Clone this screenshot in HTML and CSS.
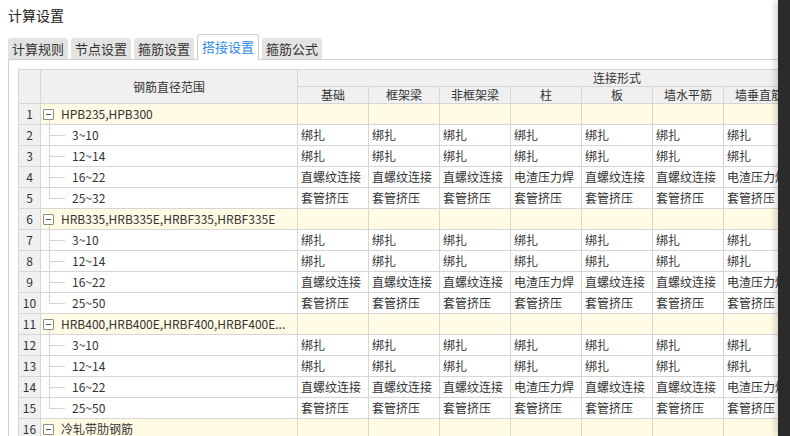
FILE: index.html
```html
<!DOCTYPE html>
<html lang="zh-CN">
<head>
<meta charset="utf-8">
<title>计算设置</title>
<link rel="stylesheet" href="styles.css">
</head>
<body>
<div class="app">
  <div class="main">
    <div class="title">计算设置</div>
    <div class="tabs">
      <div class="tab">计算规则</div>
      <div class="tab">节点设置</div>
      <div class="tab">箍筋设置</div>
      <div class="tab active">搭接设置</div>
      <div class="tab">箍筋公式</div>
    </div>
    <div class="panel">
      <table class="grid">
        <colgroup>
          <col class="c-num"><col class="c-name">
          <col class="c-d"><col class="c-d"><col class="c-d"><col class="c-d"><col class="c-d"><col class="c-d"><col class="c-d"><col class="c-d"><col class="c-d">
        </colgroup>
        <thead>
          <tr class="h1">
            <th class="num" rowspan="2"></th>
            <th rowspan="2">钢筋直径范围</th>
            <th colspan="9">连接形式</th>
          </tr>
          <tr class="h2">
            <th>基础</th><th>框架梁</th><th>非框架梁</th><th>柱</th><th>板</th><th>墙水平筋</th><th>墙垂直筋</th><th>其它</th><th>螺旋筋</th>
          </tr>
        </thead>
        <tbody>
          <tr class="group"><th class="num">1</th><td class="name"><span class="toggle"></span>HPB235,HPB300</td><td></td><td></td><td></td><td></td><td></td><td></td><td></td><td></td><td></td></tr>
          <tr class="child"><th class="num">2</th><td class="name">3~10</td><td>绑扎</td><td>绑扎</td><td>绑扎</td><td>绑扎</td><td>绑扎</td><td>绑扎</td><td>绑扎</td><td>绑扎</td><td>绑扎</td></tr>
          <tr class="child"><th class="num">3</th><td class="name">12~14</td><td>绑扎</td><td>绑扎</td><td>绑扎</td><td>绑扎</td><td>绑扎</td><td>绑扎</td><td>绑扎</td><td>绑扎</td><td>绑扎</td></tr>
          <tr class="child"><th class="num">4</th><td class="name">16~22</td><td>直螺纹连接</td><td>直螺纹连接</td><td>直螺纹连接</td><td>电渣压力焊</td><td>直螺纹连接</td><td>直螺纹连接</td><td>电渣压力焊</td><td>直螺纹连接</td><td>直螺纹连接</td></tr>
          <tr class="child last"><th class="num">5</th><td class="name">25~32</td><td>套管挤压</td><td>套管挤压</td><td>套管挤压</td><td>套管挤压</td><td>套管挤压</td><td>套管挤压</td><td>套管挤压</td><td>套管挤压</td><td>套管挤压</td></tr>
          <tr class="group"><th class="num">6</th><td class="name"><span class="toggle"></span>HRB335,HRB335E,HRBF335,HRBF335E</td><td></td><td></td><td></td><td></td><td></td><td></td><td></td><td></td><td></td></tr>
          <tr class="child"><th class="num">7</th><td class="name">3~10</td><td>绑扎</td><td>绑扎</td><td>绑扎</td><td>绑扎</td><td>绑扎</td><td>绑扎</td><td>绑扎</td><td>绑扎</td><td>绑扎</td></tr>
          <tr class="child"><th class="num">8</th><td class="name">12~14</td><td>绑扎</td><td>绑扎</td><td>绑扎</td><td>绑扎</td><td>绑扎</td><td>绑扎</td><td>绑扎</td><td>绑扎</td><td>绑扎</td></tr>
          <tr class="child"><th class="num">9</th><td class="name">16~22</td><td>直螺纹连接</td><td>直螺纹连接</td><td>直螺纹连接</td><td>电渣压力焊</td><td>直螺纹连接</td><td>直螺纹连接</td><td>电渣压力焊</td><td>直螺纹连接</td><td>直螺纹连接</td></tr>
          <tr class="child last"><th class="num">10</th><td class="name">25~50</td><td>套管挤压</td><td>套管挤压</td><td>套管挤压</td><td>套管挤压</td><td>套管挤压</td><td>套管挤压</td><td>套管挤压</td><td>套管挤压</td><td>套管挤压</td></tr>
          <tr class="group"><th class="num">11</th><td class="name"><span class="toggle"></span>HRB400,HRB400E,HRBF400,HRBF400E...</td><td></td><td></td><td></td><td></td><td></td><td></td><td></td><td></td><td></td></tr>
          <tr class="child"><th class="num">12</th><td class="name">3~10</td><td>绑扎</td><td>绑扎</td><td>绑扎</td><td>绑扎</td><td>绑扎</td><td>绑扎</td><td>绑扎</td><td>绑扎</td><td>绑扎</td></tr>
          <tr class="child"><th class="num">13</th><td class="name">12~14</td><td>绑扎</td><td>绑扎</td><td>绑扎</td><td>绑扎</td><td>绑扎</td><td>绑扎</td><td>绑扎</td><td>绑扎</td><td>绑扎</td></tr>
          <tr class="child"><th class="num">14</th><td class="name">16~22</td><td>直螺纹连接</td><td>直螺纹连接</td><td>直螺纹连接</td><td>电渣压力焊</td><td>直螺纹连接</td><td>直螺纹连接</td><td>电渣压力焊</td><td>直螺纹连接</td><td>直螺纹连接</td></tr>
          <tr class="child last"><th class="num">15</th><td class="name">25~50</td><td>套管挤压</td><td>套管挤压</td><td>套管挤压</td><td>套管挤压</td><td>套管挤压</td><td>套管挤压</td><td>套管挤压</td><td>套管挤压</td><td>套管挤压</td></tr>
          <tr class="group"><th class="num">16</th><td class="name"><span class="toggle"></span>冷轧带肋钢筋</td><td></td><td></td><td></td><td></td><td></td><td></td><td></td><td></td><td></td></tr>
        </tbody>
      </table>
    </div>
  </div>
  <div class="shade"></div>
</div>
</body>
</html>
```
FILE: styles.css
```css
* { box-sizing: border-box; }

body {
  margin: 0;
  background: #fff;
  color: #333;
  font-family: "Noto Sans CJK SC", "Noto Sans", sans-serif;
  font-size: 12px;
}

.app {
  display: flex;
  height: 436px;
  overflow: hidden;
}

.main {
  flex: 1;
  min-width: 0;
  overflow: hidden;
  padding-left: 8px;
}

.shade {
  width: 12px;
  flex: none;
  background: #2b2b2b;
  box-shadow: -3px 0 6px rgba(0, 0, 0, 0.16);
}

.title {
  height: 34px;
  padding-top: 5px;
  font-size: 14px;
  line-height: 20px;
  color: #222;
}

.tabs {
  display: flex;
  align-items: flex-end;
  gap: 3px;
  height: 25px;
}

.tab {
  height: 21px;
  padding: 0 4px;
  font-size: 13px;
  line-height: 21px;
  background: #e3e3e3;
  border-radius: 3px 3px 0 0;
  color: #333;
}

.tab.active {
  position: relative;
  height: 26px;
  margin-bottom: -1px;
  line-height: 24px;
  background: #fff;
  border: 1px solid #cfcfcf;
  border-bottom: none;
  color: #2d8ae8;
}

.panel {
  border-top: 1px solid #cfcfcf;
  border-left: 1px solid #cfcfcf;
  padding: 9px 0 0 9px;
}

.grid {
  border-collapse: collapse;
  table-layout: fixed;
  width: 918px;
}

.c-num { width: 22px; }
.c-name { width: 257px; }
.c-d { width: 71px; }

.grid th,
.grid td {
  border: 1px solid #d6d6d6;
  padding: 0 3px;
  font-weight: normal;
  white-space: nowrap;
  overflow: hidden;
  line-height: 16px;
  text-align: left;
}

.grid thead th {
  background: #f0f0f0;
  text-align: center;
  padding: 0;
}

.h1 { height: 17px; }
.h2 { height: 16px; }

.grid tbody tr { height: 21px; }

.grid .num {
  background: #f0f0f0;
  text-align: center;
  padding: 0;
}

.group td { background: #fffbe4; }

.name { position: relative; }

.group .name { padding-left: 2px; }

.group .name::after {
  content: "";
  position: absolute;
  left: 8px;
  top: 16px;
  bottom: -1px;
  border-left: 1px solid #d3d3d3;
}

.toggle {
  position: relative;
  display: inline-block;
  width: 11px;
  height: 11px;
  margin-right: 7px;
  vertical-align: -1px;
  border: 1px solid #8c8c8c;
  border-radius: 1px;
  background: #fff;
}

.toggle::before {
  content: "";
  position: absolute;
  left: 2px;
  right: 2px;
  top: 4px;
  border-top: 1px solid #555;
}

.child .name { padding-left: 31px; }

.child .name::before {
  content: "";
  position: absolute;
  left: 8px;
  top: -1px;
  bottom: -1px;
  border-left: 1px solid #d3d3d3;
}

.child.last .name::before { bottom: 50%; }

.child .name::after {
  content: "";
  position: absolute;
  left: 8px;
  width: 16px;
  top: 50%;
  border-top: 1px solid #d3d3d3;
}
```
